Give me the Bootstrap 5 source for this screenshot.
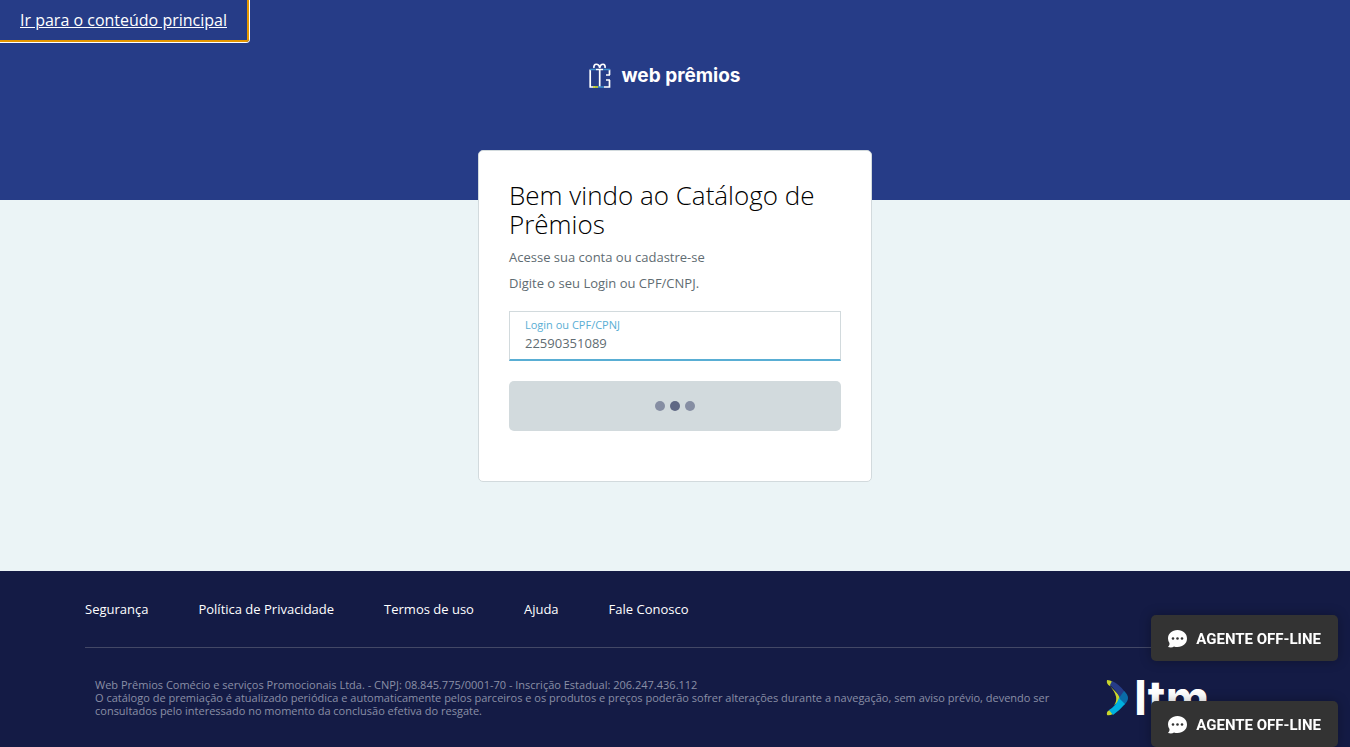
<!DOCTYPE html>
<html lang="pt-BR">
<head>
<meta charset="utf-8">
<meta name="viewport" content="width=device-width, initial-scale=1">
<title>Web Prêmios</title>
<link href="https://cdn.jsdelivr.net/npm/bootstrap@5.3.0/dist/css/bootstrap.min.css" rel="stylesheet">
<style>
  body { font-family: "Open Sans", "Noto Sans", sans-serif; font-size: 13px; background: #ebf4f6; color: #5f6c72; }
  .skip-link { font-size: 16px; line-height: 24px; color: #f2f4fa; padding: 8px 20px; border: 2px solid #e59700; border-width: 0 2px 2px 0; border-radius: 0 0 3px 0; box-shadow: 0 0 0 1px #fff; }
  .skip-link:hover { color: #fff; }
  .hero { background: #263c87; min-height: 200px; padding: 60px 20px 0 0; }
  .brand { font-family: Inter, sans-serif; font-size: 19px; font-weight: 700; line-height: 32px; color: #fff; gap: 10px; }
  .login-card { width: 394px; max-width: 100%; min-height: 332px; margin-top: -50px; padding: 30px; border: 1px solid #d2dadd; border-radius: 5px; background: #fff; }
  .login-card h1 { font-size: 26px; font-weight: 300; line-height: 29px; color: #000; margin-bottom: 9px; }
  .login-card p { line-height: 18px; margin-bottom: 8px; }
  .field { height: 50px; margin-top: 19px; padding: 5px 15px 0; border: 1px solid #d2dadd; border-bottom: 2px solid #59aed4; }
  .field label { font-size: 11px; line-height: 16px; color: #59aed4; }
  .field input { font-size: 13px; line-height: 20px; color: #5f6c72; border: 0; outline: 0; padding: 0; background: none; }
  .btn-wait, .btn-wait:disabled { height: 50px; margin-top: 20px; border: 0; border-radius: 5px; background: #d2dadd; opacity: 1; gap: 5px; }
  .wait-dot { width: 10px; height: 10px; border-radius: 50%; background: #868ea3; }
  .wait-dot.active { background: #5f6884; }
  .site-footer { background: #141b45; min-height: 176px; }
  .footer-box { max-width: 1180px; }
  .footer-links { gap: 8px 50px; padding: 28px 0; border-bottom: 1px solid #434866; }
  .footer-links a { line-height: 20px; color: #fff; text-decoration: none; }
  .footer-info { padding-top: 30px; }
  .legal { font-size: 11px; line-height: 13px; color: #8a8fa5; padding: 0 10px; }
  .ltm-mark { color: #fff; font-family: Inter, sans-serif; font-weight: 700; font-size: 48px; line-height: 36px; gap: 4px; padding: 2px 18px 0 0; }
  .chat-stack { right: 12px; bottom: 0; gap: 40px; z-index: 10; }
  .chat-btn { font-family: Roboto, sans-serif; font-size: 15px; font-weight: 700; line-height: 20px; height: 46px; padding: 1px 17px 0; gap: 9px; border: 0; border-radius: 5px; color: #fff; background: #333; box-shadow: 0 0 12px rgba(0,0,0,.3); white-space: nowrap; }
</style>
</head>
<body class="d-flex flex-column min-vh-100">
<a class="skip-link position-absolute top-0 start-0" href="#conteudo">Ir para o conteúdo principal</a>
<header class="hero d-flex justify-content-center align-items-start">
  <div class="brand d-flex align-items-center">
    <svg width="22" height="26" viewBox="0 0 22 26" fill="none" stroke="#fff" stroke-width="1.7" aria-hidden="true">
      <path d="M5 5C4 0 10 0 10.700 5C11.500 0 17 0 16 5" />
      <path d="M6 24H1.200V6.500M20.500 12V6.500M20.500 17v7H15M10.700 6v18M7 6.500h7M17 12h4M17 17h4" />
      <path d="M1 6.500h6M14 6.500h7M9 24h6" stroke="#3f91cd" />
      <path d="M4 24h5" stroke="#c9d52c" />
    </svg>
    <span>web prêmios</span>
  </div>
</header>
<main id="conteudo" class="flex-grow-1 d-flex justify-content-center align-items-start pb-5">
  <form class="login-card">
    <h1>Bem vindo ao Catálogo de Prêmios</h1>
    <p>Acesse sua conta ou cadastre-se</p>
    <p>Digite o seu Login ou CPF/CNPJ.</p>
    <div class="field d-flex flex-column">
      <label for="login">Login ou CPF/CPNJ</label>
      <input id="login" type="text" value="22590351089" autocomplete="off">
    </div>
    <button class="btn btn-wait w-100 d-flex justify-content-center align-items-center" type="submit" disabled aria-label="Carregando">
      <span class="wait-dot"></span><span class="wait-dot active"></span><span class="wait-dot"></span>
    </button>
  </form>
</main>
<footer class="site-footer">
  <div class="footer-box mx-auto">
    <nav class="footer-links d-flex flex-wrap">
      <a href="#">Segurança</a>
      <a href="#">Política de Privacidade</a>
      <a href="#">Termos de uso</a>
      <a href="#">Ajuda</a>
      <a href="#">Fale Conosco</a>
    </nav>
    <div class="row g-0 footer-info">
      <div class="col-10">
        <p class="legal mb-0">Web Prêmios Comécio e serviços Promocionais Ltda. - CNPJ: 08.845.775/0001-70 - Inscrição Estadual: 206.247.436.112<br>O catálogo de premiação é atualizado periódica e automaticamente pelos parceiros e os produtos e preços poderão sofrer alterações durante a navegação, sem aviso prévio, devendo ser consultados pelo interessado no momento da conclusão efetiva do resgate.</p>
      </div>
      <div class="col-2 d-flex justify-content-center">
        <div class="ltm-mark d-flex align-items-start">
          <svg width="24" height="36" viewBox="0 0 24 36" aria-hidden="true">
            <path fill="#c9d52c" d="M1 0Q4 0 7 2L4 6Q0 4 1 0M4 6 11 13 15 18 11 23 8 25Q14 18 4 6M1 35Q0 31 4 30L7 34Q3 36 1 35" />
            <path fill="#263c87" d="M6 1Q13 4 19 12L14 18Q10 10 4 5Z" />
            <path fill="#0a6ca8" d="M18 11Q26 18 18 25L13 18Z" />
            <path fill="#00b1df" d="M13 18 19 24Q13 31 7 35L3 30Q10 26 13 18" />
          </svg>
          <span>ltm</span>
        </div>
      </div>
    </div>
  </div>
</footer>
<div class="chat-stack position-fixed d-flex flex-column">
  <button class="chat-btn d-flex align-items-center" type="button">
    <svg width="19" height="18" viewBox="0 0 19 18" aria-hidden="true"><path fill="#fff" d="M9.500 0C15 0 19 3.600 19 8.500S15 17 9.500 17q-2 0-3.500-.6Q4 18 0 17q2-2 1.500-4Q0 11 0 8.500C0 3.600 4 0 9.500 0" /><g fill="#333"><circle cx="5" cy="8.500" r="1.300" /><circle cx="9.500" cy="8.500" r="1.300" /><circle cx="14" cy="8.500" r="1.300" /></g></svg>
    <span>AGENTE OFF-LINE</span>
  </button>
  <button class="chat-btn d-flex align-items-center" type="button">
    <svg width="19" height="18" viewBox="0 0 19 18" aria-hidden="true"><path fill="#fff" d="M9.500 0C15 0 19 3.600 19 8.500S15 17 9.500 17q-2 0-3.500-.6Q4 18 0 17q2-2 1.500-4Q0 11 0 8.500C0 3.600 4 0 9.500 0" /><g fill="#333"><circle cx="5" cy="8.500" r="1.300" /><circle cx="9.500" cy="8.500" r="1.300" /><circle cx="14" cy="8.500" r="1.300" /></g></svg>
    <span>AGENTE OFF-LINE</span>
  </button>
</div>
<script src="https://cdn.jsdelivr.net/npm/bootstrap@5.3.0/dist/js/bootstrap.bundle.min.js"></script>
</body>
</html>
